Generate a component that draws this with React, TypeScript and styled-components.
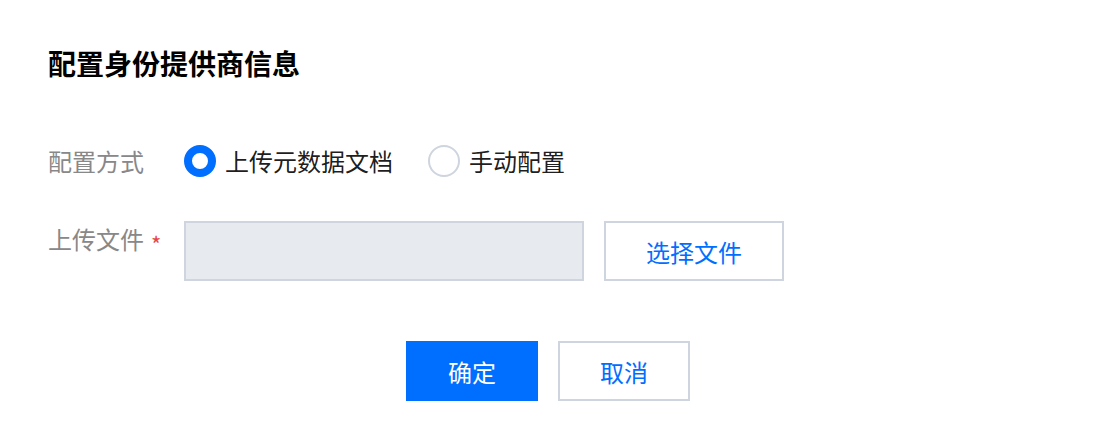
import React, { useState } from 'react';
import styled, { createGlobalStyle } from "styled-components";

const GlobalStyle = createGlobalStyle`
  * {
    box-sizing: border-box;
  }

  body {
    margin: 0;
    background: #fff;
    font-family: "Noto Sans CJK SC", "Noto Sans", sans-serif;
    color: rgba(0, 0, 0, 0.9);
  }
`;

const Page = styled.div`
  width: 1094px;
  height: 446px;
  padding: 43px 48px 0;
`;

const Title = styled.h2`
  margin: 0;
  font-size: 28px;
  line-height: 40px;
  font-weight: 700;
  color: #000;
`;

const Form = styled.div`
  display: flex;
  flex-direction: column;
  margin-top: 60px;
`;

const Row = styled.div<{ $gap?: number }>`
  display: flex;
  align-items: flex-start;
  margin-top: ${(p) => p.$gap ?? 0}px;
`;

const Label = styled.div`
  width: 136px;
  flex-shrink: 0;
  font-size: 24px;
  line-height: 36px;
  color: #888;
  display: flex;
  align-items: flex-start;
`;

const Required = styled.span`
  color: #e54545;
  font-size: 22px;
  margin-left: 7px;
  padding-top: 4px;
  line-height: 36px;
`;

const Controls = styled.div`
  display: flex;
  align-items: center;
`;

const RadioGroup = styled.div`
  display: flex;
  align-items: center;
  gap: 35px;
  height: 36px;
`;

const RadioItem = styled.label`
  display: flex;
  align-items: center;
  gap: 9px;
  cursor: pointer;
  font-size: 24px;
  line-height: 36px;
  color: rgba(0, 0, 0, 0.9);
`;

const RadioDot = styled.span<{ $checked: boolean }>`
  width: 32px;
  height: 32px;
  border-radius: 50%;
  background: #fff;
  border: ${(p) => (p.$checked ? "8px solid #006eff" : "2px solid #cfd5de")};
`;

const FileInput = styled.div`
  width: 400px;
  height: 60px;
  background: #e7eaef;
  border: 2px solid #cfd5de;
`;

const Button = styled.button<{ $primary?: boolean }>`
  height: 60px;
  padding: 0;
  font-family: inherit;
  font-size: 24px;
  cursor: pointer;
  background: ${(p) => (p.$primary ? "#006eff" : "#fff")};
  color: ${(p) => (p.$primary ? "#fff" : "#006eff")};
  border: 2px solid ${(p) => (p.$primary ? "#006eff" : "#cfd5de")};
`;

const SelectButton = styled(Button)`
  width: 180px;
  margin-left: 20px;
`;

const Footer = styled.div`
  display: flex;
  justify-content: center;
  gap: 20px;
  margin-top: 60px;
  margin-left: -46px;
  margin-right: -48px;
`;

const FooterButton = styled(Button)`
  width: 132px;
`;

export default function App() {
  const [mode, setMode] = useState("upload");

  return (
    <Page>
      <GlobalStyle />
      <Title>配置身份提供商信息</Title>
      <Form>
        <Row>
          <Label>配置方式</Label>
          <RadioGroup>
            <RadioItem onClick={() => setMode("upload")}>
              <RadioDot $checked={mode === "upload"} />
              上传元数据文档
            </RadioItem>
            <RadioItem onClick={() => setMode("manual")}>
              <RadioDot $checked={mode === "manual"} />
              手动配置
            </RadioItem>
          </RadioGroup>
        </Row>
        <Row $gap={42}>
          <Label>
            上传文件<Required>*</Required>
          </Label>
          <Controls>
            <FileInput />
            <SelectButton>选择文件</SelectButton>
          </Controls>
        </Row>
      </Form>
      <Footer>
        <FooterButton $primary>确定</FooterButton>
        <FooterButton>取消</FooterButton>
      </Footer>
    </Page>
  );
}
